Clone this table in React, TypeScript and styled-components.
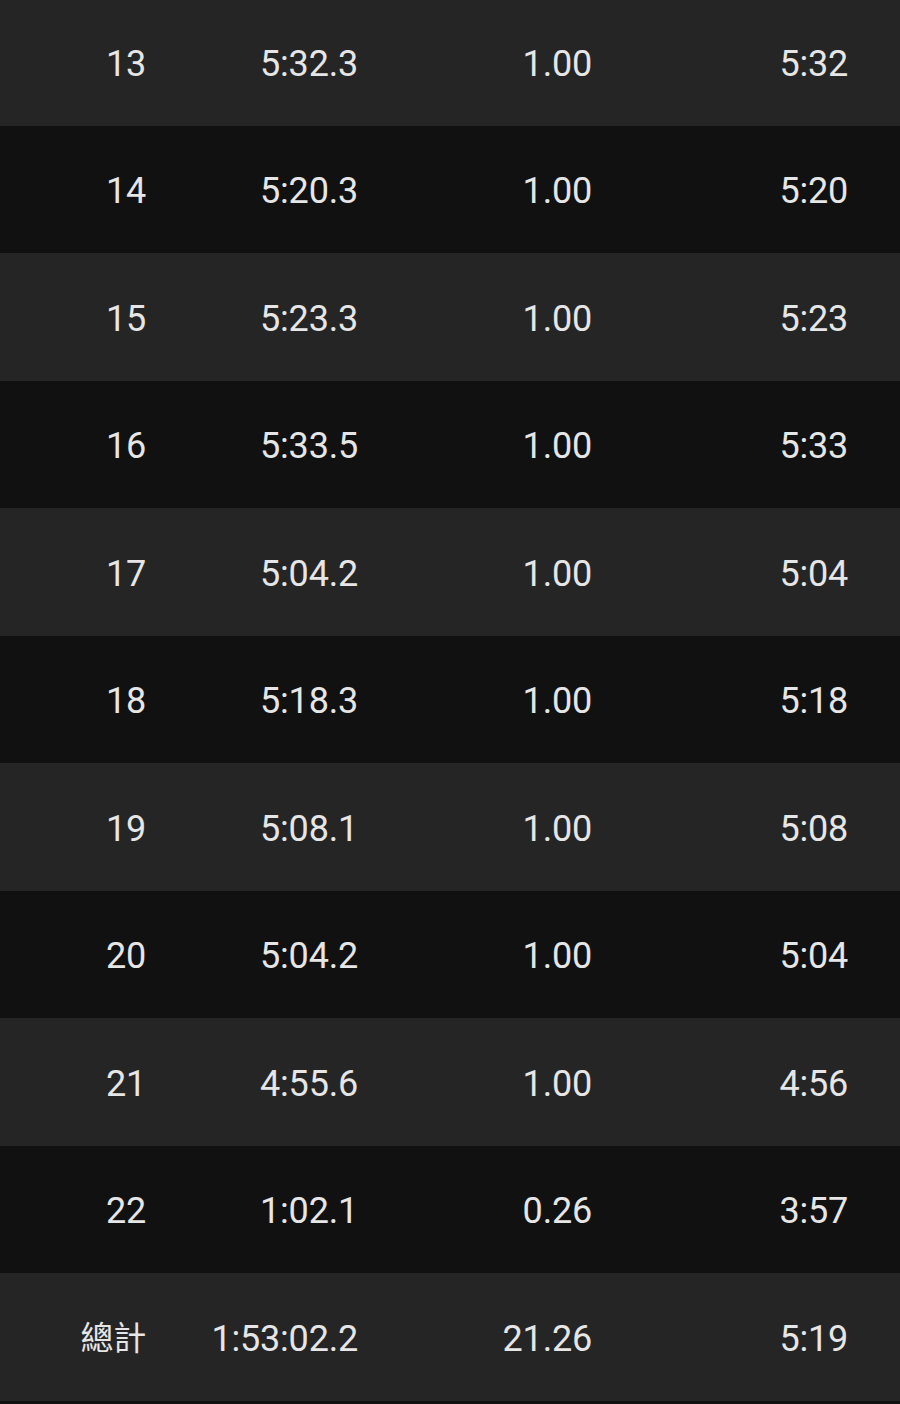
import { ReactElement } from 'react'
import styled, { createGlobalStyle } from 'styled-components'

interface Split {
  lap: string
  time: string
  distance: string
  pace: string
}

const splits: Split[] = [
  { lap: '13', time: '5:32.3', distance: '1.00', pace: '5:32' },
  { lap: '14', time: '5:20.3', distance: '1.00', pace: '5:20' },
  { lap: '15', time: '5:23.3', distance: '1.00', pace: '5:23' },
  { lap: '16', time: '5:33.5', distance: '1.00', pace: '5:33' },
  { lap: '17', time: '5:04.2', distance: '1.00', pace: '5:04' },
  { lap: '18', time: '5:18.3', distance: '1.00', pace: '5:18' },
  { lap: '19', time: '5:08.1', distance: '1.00', pace: '5:08' },
  { lap: '20', time: '5:04.2', distance: '1.00', pace: '5:04' },
  { lap: '21', time: '4:55.6', distance: '1.00', pace: '4:56' },
  { lap: '22', time: '1:02.1', distance: '0.26', pace: '3:57' },
  { lap: '總計', time: '1:53:02.2', distance: '21.26', pace: '5:19' },
]

const GlobalStyle = createGlobalStyle`
  html, body {
    margin: 0;
    padding: 0;
    background: #111111;
  }
  body {
    font-family: Roboto, "Noto Sans CJK TC", sans-serif;
    color: #e6e6e6;
  }
`

const Table = styled.div`
  width: 900px;
  height: 1404px;
  overflow: hidden;
  display: flex;
  flex-direction: column;
`

const Rows = styled.div`
  margin-top: -2px;
  display: flex;
  flex-direction: column;
`

const Row = styled.div<{ $shaded: boolean }>`
  height: 127.5px;
  box-sizing: border-box;
  padding-top: 4px;
  display: grid;
  grid-template-columns: 146px 212px 234px 256px 1fr;
  align-items: center;
  background: ${({ $shaded }): string => ($shaded ? '#252525' : '#111111')};
`

const Cell = styled.div<{ $cjk?: boolean }>`
  text-align: right;
  font-size: ${({ $cjk }): string => ($cjk ? '33px' : '36px')};
  line-height: 1;
  white-space: nowrap;
  letter-spacing: -0.2px;
`

const isCjk = (text: string): boolean => /[^\x00-\x7f]/.test(text)

const App = (): ReactElement => {
  return (
    <>
      <GlobalStyle />
      <Table>
        <Rows>
          {splits.map((s, i) => (
            <Row key={s.lap} $shaded={i % 2 === 0}>
              <Cell $cjk={isCjk(s.lap)}>{s.lap}</Cell>
              <Cell>{s.time}</Cell>
              <Cell>{s.distance}</Cell>
              <Cell>{s.pace}</Cell>
            </Row>
          ))}
        </Rows>
      </Table>
    </>
  )
}

export default App
